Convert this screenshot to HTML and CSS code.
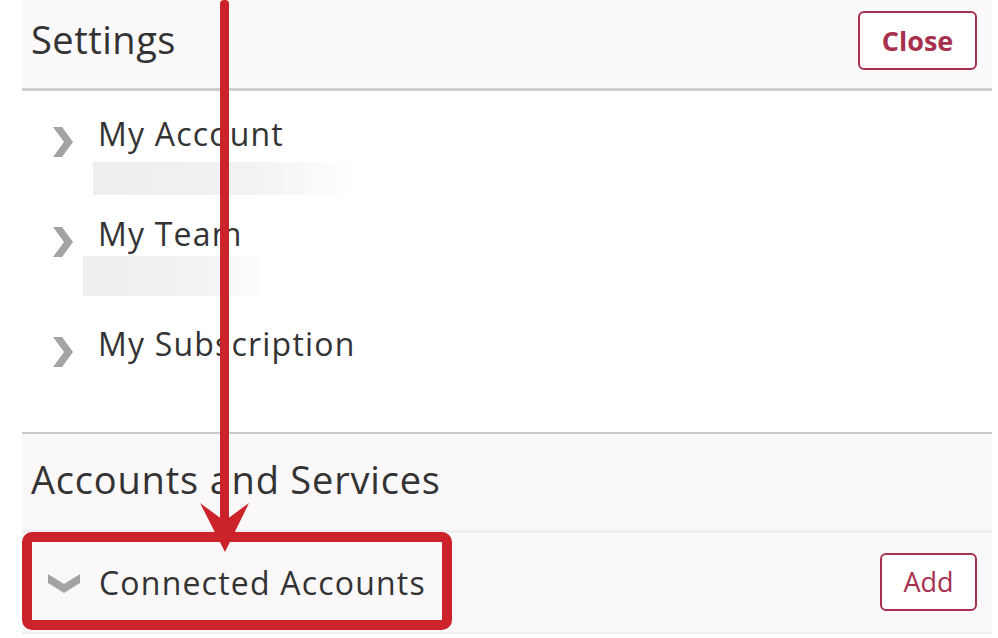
FILE: index.html
```html
<!DOCTYPE html>
<html lang="en">
<head>
<meta charset="utf-8">
<title>Settings</title>
<link rel="stylesheet" href="styles.css">
</head>
<body>
<div class="page">
  <div class="panel">
    <header class="panel-head">
      <h1 class="title">Settings</h1>
      <button class="btn btn-close">Close</button>
    </header>

    <ul class="menu">
      <li class="menu-item item-account">
        <svg class="chev-right" viewBox="0 0 20 30" width="20" height="30"><polygon points="0,0 9,0 20,15 9,30 0,30 11,15"/></svg>
        <div class="item-body">
          <span class="item-label">My Account</span>
          <div class="ph ph-account"></div>
        </div>
      </li>
      <li class="menu-item item-team">
        <svg class="chev-right" viewBox="0 0 20 30" width="20" height="30"><polygon points="0,0 9,0 20,15 9,30 0,30 11,15"/></svg>
        <div class="item-body">
          <span class="item-label">My Team</span>
          <div class="ph ph-team"></div>
        </div>
      </li>
      <li class="menu-item item-sub">
        <svg class="chev-right" viewBox="0 0 20 30" width="20" height="30"><polygon points="0,0 9,0 20,15 9,30 0,30 11,15"/></svg>
        <div class="item-body">
          <span class="item-label">My Subscription</span>
        </div>
      </li>
    </ul>

    <section class="sec-head">
      <h2 class="title">Accounts and Services</h2>
    </section>

    <div class="row">
      <svg class="chev-down" viewBox="0 0 32 19" width="32" height="19"><polygon points="0,0 16,10 32,0 32,9 16,19 0,9"/></svg>
      <span class="item-label">Connected Accounts</span>
      <button class="btn btn-add">Add</button>
    </div>
  </div>

  <svg class="annot" viewBox="0 0 998 638" width="998" height="638">
    <rect x="220" y="0" width="9" height="525" rx="4" fill="#cc2229"/>
    <polygon points="200,503 224.5,521 249,503 225,552" fill="#cc2229"/>
    <rect x="27" y="537" width="420" height="88" rx="5" fill="none" stroke="#cc2229" stroke-width="10"/>
  </svg>
</div>
</body>
</html>
```

FILE: styles.css
```css
html, body {
  margin: 0;
  padding: 0;
  background: #ffffff;
}

body {
  font-family: "Open Sans", "Liberation Sans", sans-serif;
  color: #333333;
}

.page {
  position: relative;
  width: 998px;
  height: 638px;
  overflow: hidden;
}

.panel {
  margin-left: 22px;
  width: 970px;
  display: flex;
  flex-direction: column;
}

.panel-head {
  height: 88px;
  background: #fbf9fa;
  border-bottom: 3px solid #cfcfcf;
  display: flex;
  align-items: center;
  justify-content: space-between;
  padding: 0 15px 0 9px;
  box-sizing: content-box;
}

.title {
  margin: 0;
  font-size: 38px;
  font-weight: 400;
  color: #333333;
  letter-spacing: 0.8px;
}

.panel-head .title {
  margin-top: -10px;
  letter-spacing: 0.5px;
}

.btn {
  font-family: "Open Sans", "Liberation Sans", sans-serif;
  background: #ffffff;
  color: #a8304f;
  border: 2px solid #a8304f;
  border-radius: 6px;
  cursor: pointer;
  padding: 0;
}

.btn-close {
  width: 119px;
  height: 59px;
  font-size: 27px;
  font-weight: 700;
  margin-top: -8px;
}

.btn-add {
  width: 97px;
  height: 58px;
  font-size: 27px;
  font-weight: 400;
  margin-left: auto;
  margin-top: -2px;
}

.menu {
  list-style: none;
  margin: 0;
  padding: 23px 0 65px 0;
  background: #ffffff;
  border-bottom: 2px solid #cccccc;
}

.menu-item {
  display: flex;
  align-items: flex-start;
}

.chev-right {
  fill: #a3a3a3;
  margin-left: 31px;
  margin-top: 13px;
  flex: none;
}

.item-body {
  margin-left: 25px;
  display: flex;
  flex-direction: column;
}

.item-label {
  font-size: 32px;
  line-height: 40px;
  letter-spacing: 1.2px;
  color: #333333;
}

.ph {
  background: linear-gradient(90deg, #eeeeee 0%, #f2f2f2 60%, #ffffff 100%);
}

.ph-account {
  width: 262px;
  height: 33px;
  margin: 8px 0 0 -5px;
}

.ph-team {
  width: 188px;
  height: 40px;
  margin: 2px 0 0 -15px;
}

.item-team {
  margin-top: 19px;
}

.item-sub {
  margin-top: 28px;
}

.sec-head {
  height: 96px;
  background: #faf8f9;
  border-bottom: 3px solid #eeeeee;
  display: flex;
  align-items: center;
  padding-left: 9px;
}

.sec-head .title {
  margin-top: -6px;
}

.row {
  height: 99px;
  background: #faf8f9;
  border-bottom: 2px solid #eeeeee;
  display: flex;
  align-items: center;
  padding: 0 15px 0 26px;
}

.chev-down {
  fill: #a3a3a3;
  flex: none;
  margin-right: 19px;
  margin-top: 2px;
}

.annot {
  position: absolute;
  left: 0;
  top: 0;
  pointer-events: none;
}
```
